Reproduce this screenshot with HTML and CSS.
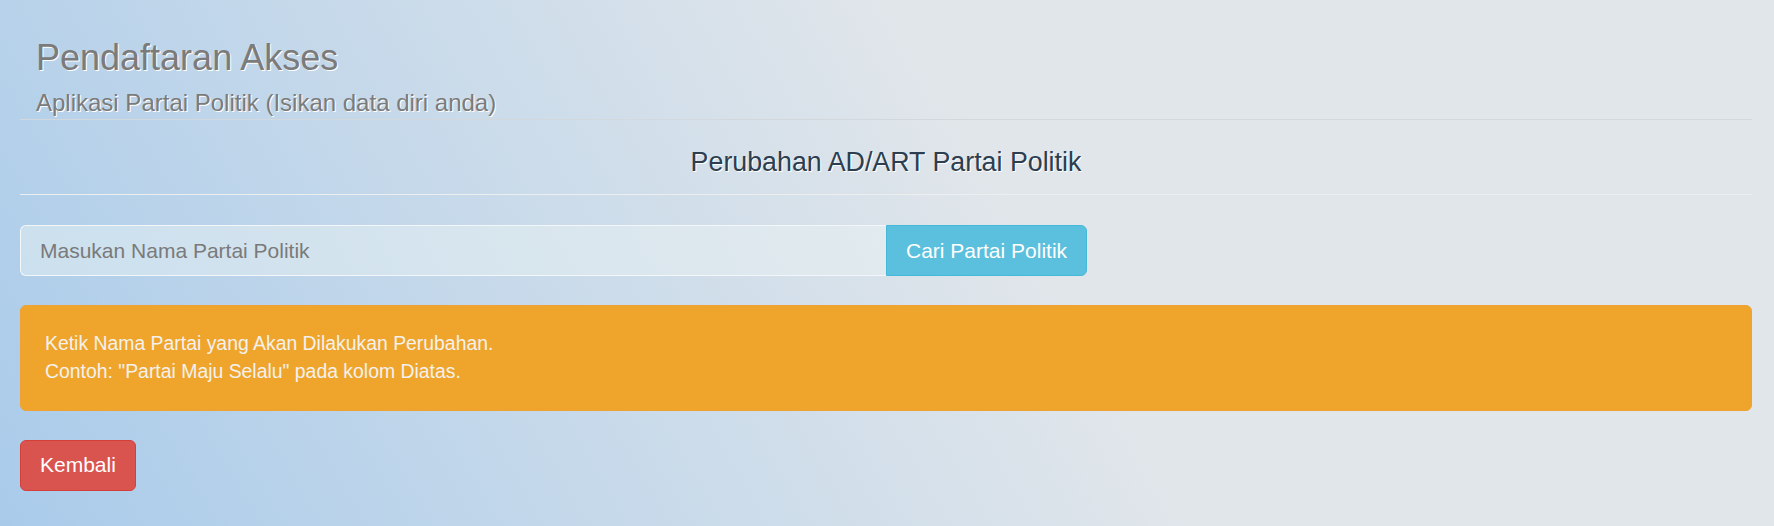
FILE: index.html
```html
<!DOCTYPE html>
<html lang="id">
<head>
    <meta charset="UTF-8">
    <meta name="viewport" content="width=device-width, initial-scale=1.0">
    <title>Pendaftaran Akses</title>
    <link rel="stylesheet" href="styles.css">
</head>
<body>
    <div class="container">
        <div class="page-header">
            <h1>Pendaftaran Akses</h1>
            <h3>Aplikasi Partai Politik (Isikan data diri anda)</h3>
        </div>

        <h2 class="section-title">Perubahan AD/ART Partai Politik</h2>

        <form class="search-form">
            <input type="text" class="search-input" placeholder="Masukan Nama Partai Politik">
            <button type="button" class="btn btn-info">Cari Partai Politik</button>
        </form>

        <div class="alert">
            Ketik Nama Partai yang Akan Dilakukan Perubahan.<br>
            Contoh: "Partai Maju Selalu" pada kolom Diatas.
        </div>

        <button type="button" class="btn btn-danger">Kembali</button>
    </div>
</body>
</html>
```

FILE: styles.css
```css
html {
    height: 100%;
}
body {
    font-family: "Liberation Sans", Arial, sans-serif;
    margin: 0;
    min-height: 100%;
    background: linear-gradient(60deg, #a9cbea 0%, #c6d9ea 30%, #e1e6ea 58%, #e1e6ea 100%);
}
.container {
    padding: 38px 22px 0 20px;
}
.page-header {
    padding-left: 16px;
    border-bottom: 1px solid #d3d8dc;
}
.page-header h1 {
    margin: 0;
    font-size: 36px;
    line-height: 40px;
    font-weight: normal;
    color: #7b7b7b;
    text-shadow: 1px 1px 0 #fff;
}
.page-header h3 {
    margin: 11px 0 0;
    font-size: 24px;
    line-height: 28px;
    font-weight: normal;
    color: #7b7b7b;
    text-shadow: 1px 1px 0 #fff;
    padding-bottom: 2px;
}
.section-title {
    margin: 27px 0 0;
    padding-bottom: 17px;
    border-bottom: 1px solid #eceef0;
    text-align: center;
    font-size: 26.8px;
    line-height: 30px;
    font-weight: normal;
    color: #2c3e50;
    text-shadow: 1px 1px 0 #fff;
}
.search-form {
    display: flex;
    margin-top: 30px;
}
.search-input {
    box-sizing: border-box;
    width: 50%;
    height: 51px;
    padding: 0 19px;
    font-family: inherit;
    font-size: 21px;
    color: #555;
    background: rgba(235, 245, 245, 0.45);
    border: 1px solid #f4f7f9;
    border-right: none;
    border-radius: 6px 0 0 6px;
    outline: none;
}
.search-input::placeholder {
    color: #7a7a7a;
}
.btn {
    box-sizing: border-box;
    height: 51px;
    padding: 0 19px;
    font-family: inherit;
    font-size: 21px;
    color: #fff;
    white-space: nowrap;
    border: 1px solid transparent;
    border-radius: 6px;
    cursor: pointer;
}
.btn-info {
    background: #5bc0de;
    border-color: #46b8da;
    border-radius: 0 6px 6px 0;
}
.btn-danger {
    background: #d9534f;
    border-color: #d43f3a;
}
.alert {
    margin: 29px 0 29px;
    padding: 23px 24px 24px;
    background: #efa52c;
    border: 1px solid #eea236;
    border-radius: 6px;
    color: #f4f1ec;
    font-size: 19.4px;
    line-height: 28.3px;
}
```
